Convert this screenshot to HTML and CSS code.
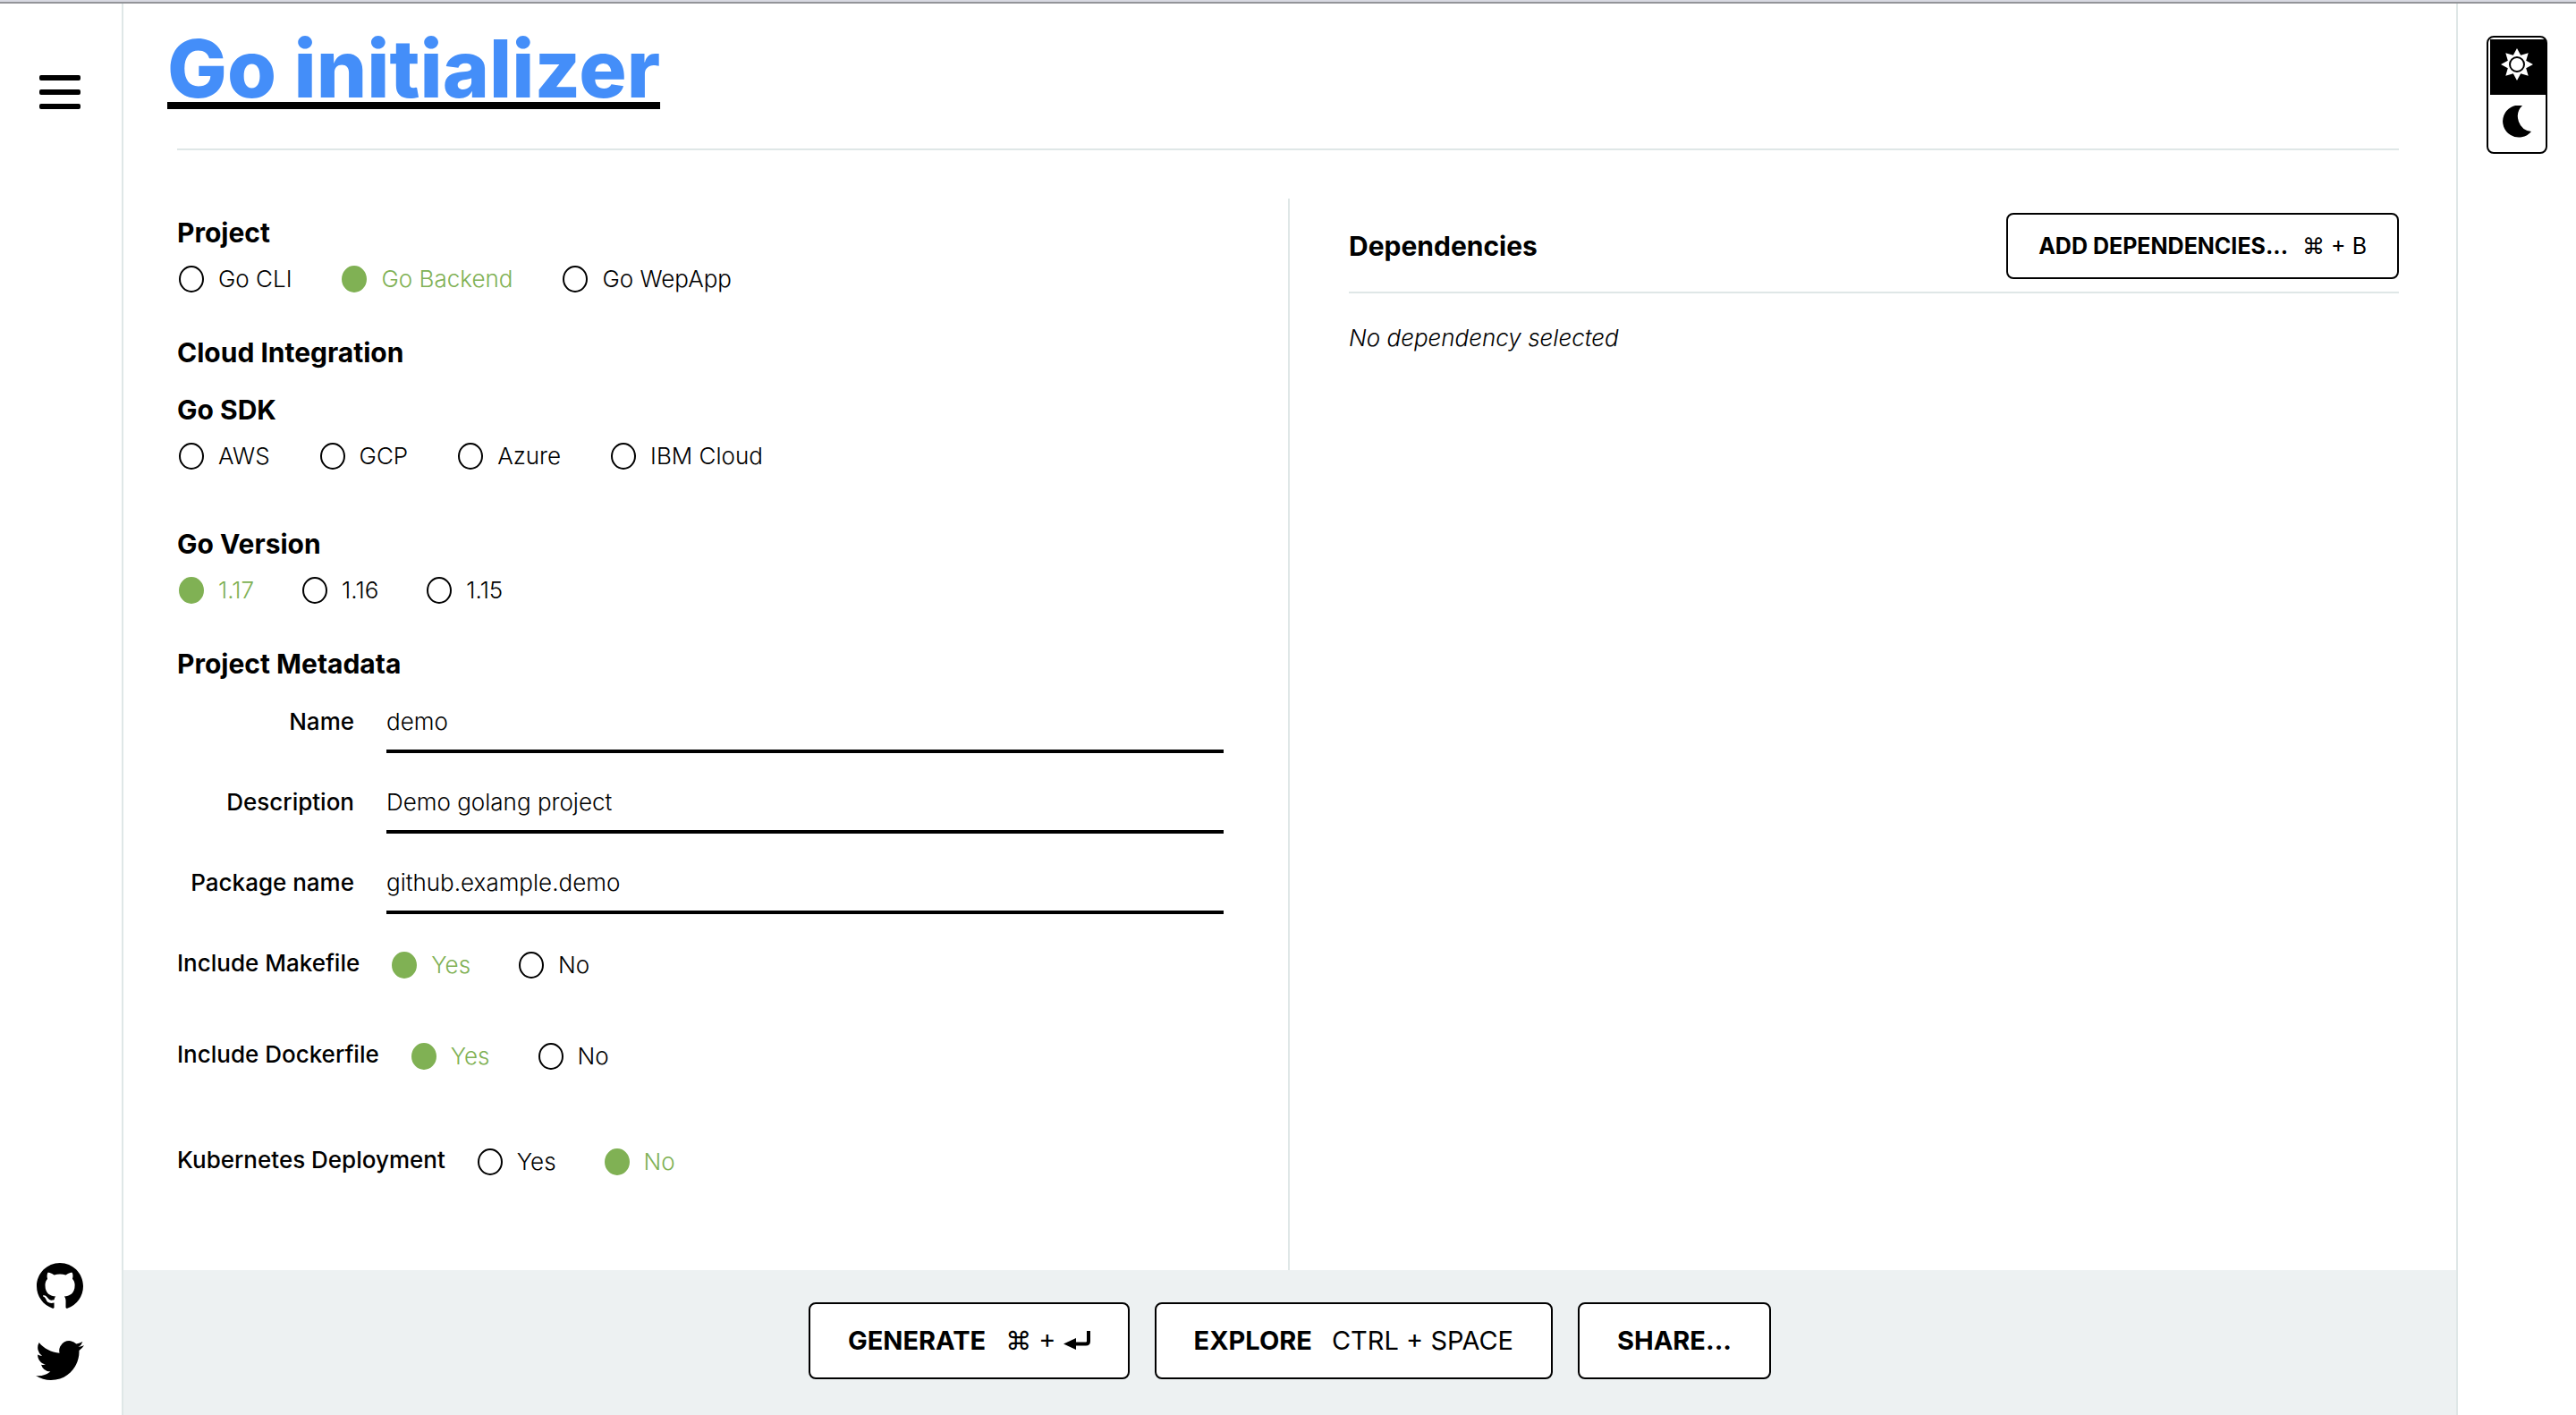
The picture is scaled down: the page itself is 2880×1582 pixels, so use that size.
FILE: index.html
```html
<!DOCTYPE html>
<html lang="en">
<head>
<meta charset="utf-8">
<meta name="viewport" content="width=device-width, initial-scale=1">
<title>Go initializer</title>
<link rel="stylesheet" href="styles.css">
</head>
<body>
<div class="page">
  <aside class="rail rail-left">
    <button class="icon-button menu" type="button" aria-label="Menu"><span></span><span></span><span></span></button>
    <nav class="social" aria-label="Social links">
      <a href="#github" aria-label="GitHub"><svg width="52" height="52" viewBox="0 0 16 16"><path d="M8 0C3.58 0 0 3.58 0 8c0 3.54 2.29 6.53 5.47 7.59.4.07.55-.17.55-.38 0-.19-.01-.82-.01-1.49-2.01.37-2.53-.49-2.69-.94-.09-.23-.48-.94-.82-1.13-.28-.15-.68-.52-.01-.53.63-.01 1.08.58 1.23.82.72 1.21 1.87.87 2.33.66.07-.52.28-.87.51-1.07-1.78-.2-3.64-.89-3.64-3.95 0-.87.31-1.59.82-2.15-.08-.2-.36-1.02.08-2.12 0 0 .67-.21 2.2.82.64-.18 1.32-.27 2-.27s1.36.09 2 .27c1.53-1.04 2.2-.82 2.2-.82.44 1.1.16 1.92.08 2.12.51.56.82 1.27.82 2.15 0 3.07-1.87 3.75-3.65 3.95.29.25.54.73.54 1.48 0 1.07-.01 1.93-.01 2.2 0 .21.15.46.55.38A8.01 8.01 0 0 0 16 8c0-4.42-3.58-8-8-8z"/></svg></a>
      <a href="#twitter" aria-label="Twitter"><svg width="54" height="54" viewBox="0 0 24 24"><path d="M23.95 4.57a10 10 0 0 1-2.82.77 4.96 4.96 0 0 0 2.16-2.72c-.95.55-2 .95-3.13 1.18a4.92 4.92 0 0 0-8.38 4.48C7.69 8.09 4.07 6.13 1.64 3.16a4.92 4.92 0 0 0 1.52 6.57 4.9 4.9 0 0 1-2.23-.61v.06c0 2.39 1.7 4.38 3.95 4.83a5 5 0 0 1-2.21.08 4.94 4.94 0 0 0 4.6 3.42A9.87 9.87 0 0 1 0 19.54a13.99 13.99 0 0 0 7.55 2.21c9.05 0 14-7.5 14-13.98 0-.21 0-.42-.02-.63a9.94 9.94 0 0 0 2.46-2.55z"/></svg></a>
    </nav>
  </aside>

  <main class="main">
    <header class="header">
      <h1 class="title"><a href="#home">Go initializer</a></h1>
    </header>

    <form class="columns" id="project-form">
      <div class="settings">
        <section>
          <h2 id="project">Project</h2>
          <div class="options" role="radiogroup" aria-labelledby="project">
            <label class="option"><input type="radio" name="project"><span>Go CLI</span></label>
            <label class="option"><input type="radio" name="project" checked><span>Go Backend</span></label>
            <label class="option"><input type="radio" name="project"><span>Go WepApp</span></label>
          </div>
        </section>
        <section>
          <h2>Cloud Integration</h2>
          <h2 id="sdk">Go SDK</h2>
          <div class="options" role="radiogroup" aria-labelledby="sdk">
            <label class="option"><input type="radio" name="sdk"><span>AWS</span></label>
            <label class="option"><input type="radio" name="sdk"><span>GCP</span></label>
            <label class="option"><input type="radio" name="sdk"><span>Azure</span></label>
            <label class="option"><input type="radio" name="sdk"><span>IBM Cloud</span></label>
          </div>
        </section>
        <section class="spaced">
          <h2 id="version">Go Version</h2>
          <div class="options options-tight" role="radiogroup" aria-labelledby="version">
            <label class="option"><input type="radio" name="version" checked><span>1.17</span></label>
            <label class="option"><input type="radio" name="version"><span>1.16</span></label>
            <label class="option"><input type="radio" name="version"><span>1.15</span></label>
          </div>
        </section>
        <section>
          <h2>Project Metadata</h2>
          <div class="fields">
            <label for="name">Name</label><input id="name" type="text" value="demo">
            <label for="description">Description</label><input id="description" type="text" value="Demo golang project">
            <label for="package">Package name</label><input id="package" type="text" value="github.example.demo">
          </div>
          <div class="choices">
            <div class="choice" role="radiogroup" aria-labelledby="makefile">
              <span class="choice-label" id="makefile">Include Makefile</span>
              <div class="options options-tight">
                <label class="option"><input type="radio" name="makefile" checked><span>Yes</span></label>
                <label class="option"><input type="radio" name="makefile"><span>No</span></label>
              </div>
            </div>
            <div class="choice" role="radiogroup" aria-labelledby="dockerfile">
              <span class="choice-label" id="dockerfile">Include Dockerfile</span>
              <div class="options options-tight">
                <label class="option"><input type="radio" name="dockerfile" checked><span>Yes</span></label>
                <label class="option"><input type="radio" name="dockerfile"><span>No</span></label>
              </div>
            </div>
            <div class="choice choice-last" role="radiogroup" aria-labelledby="kubernetes">
              <span class="choice-label" id="kubernetes">Kubernetes Deployment</span>
              <div class="options options-tight">
                <label class="option"><input type="radio" name="kubernetes"><span>Yes</span></label>
                <label class="option"><input type="radio" name="kubernetes" checked><span>No</span></label>
              </div>
            </div>
          </div>
        </section>
      </div>

      <section class="dependencies">
        <div class="dependencies-head">
          <h2>Dependencies</h2>
          <button class="button button-small" type="button"><b>ADD DEPENDENCIES...</b><span>⌘ + B</span></button>
        </div>
        <p class="empty">No dependency selected</p>
      </section>
    </form>

    <footer class="actions">
      <button class="button" type="submit" form="project-form"><b>GENERATE</b><span class="keys">⌘ + <svg width="30" height="22" viewBox="0 0 30 22"><path d="M0 14.500L14 8v13z"/><path d="M12 14.500h13q3 0 3-3V0" fill="none" stroke="#000" stroke-width="4"/></svg></span></button>
      <button class="button" type="button"><b>EXPLORE</b><span>CTRL + SPACE</span></button>
      <button class="button" type="button"><b>SHARE...</b></button>
    </footer>
  </main>

  <aside class="rail rail-right">
    <div class="theme">
      <button class="theme-light" type="button" aria-label="Light theme"><svg width="36" height="36" viewBox="0 0 36 36"><path d="M18 0l4.200 7.800 8.500-2.500-2.500 8.500L36 18l-7.800 4.200 2.500 8.500-8.500-2.500L18 36l-4.200-7.800-8.500 2.500 2.500-8.500L0 18l7.800-4.200-2.500-8.500 8.500 2.500z" fill="#fff"/><circle cx="18" cy="18" r="8" fill="#fff" stroke="#000" stroke-width="2"/></svg></button>
      <button class="theme-dark" type="button" aria-label="Dark theme"><svg width="32" height="36" viewBox="0 0 32 36"><path d="M22 0A18 18 0 1 0 32 29A17 17 0 0 1 22 0z"/></svg></button>
    </div>
  </aside>
</div>
</body>
</html>
```
FILE: styles.css
```css
* {
  box-sizing: border-box;
}

body {
  margin: 0;
  background: #fff;
  color: #000;
  font: 300 26px/32px Inter, "Open Sans", sans-serif;
}

h1, h2, p {
  margin: 0;
}

h2 {
  font-size: 30px;
  font-weight: 700;
  line-height: 32px;
}

svg {
  display: block;
}

button, input {
  font: inherit;
  color: inherit;
}

button {
  cursor: pointer;
}

.page {
  display: grid;
  grid-template-columns: 136px minmax(0, 1fr) 132px;
  grid-template-rows: 2px 1fr;
  min-height: 100vh;
  border-top: 2px solid #d8d9e2;
}

.page::before {
  content: "";
  grid-column: 1 / -1;
  background: #939499;
}

/* Side rails */

.rail {
  display: flex;
  flex-direction: column;
  align-items: center;
}

.rail-left {
  justify-content: space-between;
  padding: 80px 2px 34px 0;
}

.rail-right {
  padding: 36px 0;
}

.icon-button {
  padding: 0;
  border: 0;
  background: none;
}

.menu {
  display: grid;
  gap: 10px;
}

.menu span {
  width: 46px;
  height: 6px;
  border-radius: 2px;
  background: #000;
}

.social {
  display: grid;
  justify-items: center;
  gap: 30px;
}

.theme {
  display: grid;
  width: 68px;
  border: 2px solid #000;
  border-radius: 8px;
}

.theme button {
  display: grid;
  place-items: center;
  height: 64px;
  padding: 0 0 4px;
  border: 0;
  background: none;
}

.theme .theme-light {
  margin: 2px 0 0 2px;
  height: 62px;
  padding: 0 2px 6px 0;
  background: #000;
}

/* Main column */

.main {
  display: flex;
  flex-direction: column;
  border: solid #dfe7e7;
  border-width: 0 2px;
}

.header {
  height: 164px;
  margin: 0 64px 0 60px;
  border-bottom: 2px solid #dfe7e7;
}

.title {
  margin-left: -11px;
  padding-top: 25px;
  font-size: 89px;
  font-weight: 800;
  line-height: 96px;
}

.title a {
  color: #448ef9;
  text-decoration: underline #000 8px;
  text-decoration-skip-ink: none;
  text-underline-offset: 5px;
}

.columns {
  display: grid;
  flex: 1;
  grid-template-columns: repeat(2, minmax(0, 1fr));
  margin: 54px 64px 0 60px;
}

.settings {
  padding: 22px 72px 60px 0;
}

.settings section + section {
  margin-top: 50px;
}

.settings section + .spaced {
  margin-top: 66px;
}

.settings h2 + h2 {
  margin-top: 32px;
}

.options {
  display: flex;
  flex-wrap: wrap;
  gap: 54px;
}

.options-tight {
  gap: 52px;
}

h2 + .options {
  margin-top: 20px;
}

.option {
  display: flex;
  align-items: center;
  gap: 16px;
}

.option input {
  appearance: none;
  width: 28px;
  height: 30px;
  margin: 0 0 0 2px;
  border: 2px solid #000;
  border-radius: 50%;
}

.option input:checked {
  border-color: #80b154;
  background: #80b154;
}

.option input:checked + span {
  color: #80b154;
}

.fields {
  display: grid;
  grid-template-columns: 198px 1fr;
  gap: 30px 36px;
  margin-top: 24px;
}

.fields label {
  padding-top: 9px;
  font-weight: 500;
  text-align: right;
}

.fields input {
  width: 100%;
  height: 60px;
  padding: 0 0 8px;
  border: 0;
  border-bottom: 4px solid #000;
  border-radius: 0;
  background: none;
  font-weight: 300;
}

.choices {
  display: grid;
  gap: 70px;
  margin-top: 41px;
}

.choice {
  display: flex;
  gap: 34px;
}

.choice-last {
  margin-top: 16px;
}

.choice-label {
  height: 32px;
  font-weight: 500;
  line-height: 28px;
}

.dependencies {
  padding: 16px 0 0 66px;
  border-left: 2px solid #dfe7e7;
}

.dependencies-head {
  display: flex;
  align-items: center;
  justify-content: space-between;
  padding-bottom: 14px;
  border-bottom: 2px solid #dfe7e7;
}

.empty {
  margin-top: 34px;
  font-style: italic;
}

/* Buttons */

.button {
  display: flex;
  align-items: center;
  gap: 22px;
  height: 86px;
  padding: 0 42px;
  border: 2px solid #000;
  border-radius: 8px;
  background: #fff;
  font-size: 29px;
  font-weight: 400;
  white-space: nowrap;
}

.button b {
  font-weight: 700;
}

.button-small {
  gap: 16px;
  height: 74px;
  padding: 0 34px;
  font-size: 25px;
}

.keys {
  display: flex;
  align-items: center;
  gap: 8px;
}

.actions {
  display: flex;
  flex-wrap: wrap;
  justify-content: center;
  gap: 28px;
  padding: 36px 0 40px;
  background: #edf1f2;
}
```
